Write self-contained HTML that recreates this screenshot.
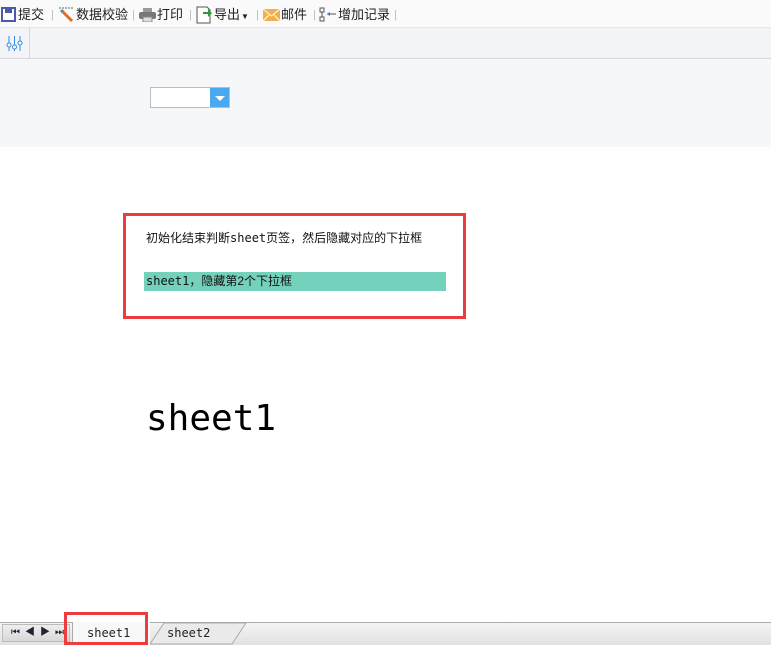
<!DOCTYPE html>
<html><head><meta charset="utf-8"><style>
*{margin:0;padding:0;box-sizing:border-box}
body{width:771px;height:645px;background:#fff;position:relative;overflow:hidden;font-family:"Liberation Sans","Noto Sans CJK SC",sans-serif;}
.tb{position:absolute;left:0;top:0;width:771px;height:28px;background:#fafafa;border-bottom:1px solid #e4e6ea;font-size:13px;color:#222}
.tb span{position:absolute;top:7px;line-height:16px}
.sep{color:#bbb;font-size:11px}
.r2{position:absolute;left:0;top:28px;width:771px;height:31px;background:#f3f4f7;border-bottom:1px solid #d6d8dd}
.gray{position:absolute;left:0;top:59px;width:771px;height:88px;background:#f6f7f9}
.mono{font-family:"DejaVu Sans Mono","Liberation Mono","Noto Sans CJK SC",monospace}
</style></head><body>
<div class="tb">
<svg style="position:absolute;left:1px;top:7px" width="15" height="15"><rect x="1" y="1" width="13" height="13" fill="#fff" stroke="#4a5aa8" stroke-width="2"/><rect x="4" y="1" width="7" height="5" fill="#4a5aa8"/></svg>
<span style="left:18px">提交</span><span class="sep" style="left:51px">|</span>
<svg style="position:absolute;left:58px;top:6px" width="17" height="17"><line x1="1" y1="2" x2="15" y2="2" stroke="#666" stroke-dasharray="2 1"/><line x1="4" y1="5" x2="14" y2="15" stroke="#e07020" stroke-width="3"/><line x1="3" y1="4" x2="5" y2="6" stroke="#49a" stroke-width="3"/></svg>
<span style="left:76px">数据校验</span><span class="sep" style="left:132px">|</span>
<svg style="position:absolute;left:139px;top:8px" width="17" height="14"><rect x="4" y="0" width="9" height="4" fill="#999"/><rect x="0" y="4" width="17" height="7" rx="2" fill="#777"/><rect x="4" y="9" width="9" height="5" fill="#ddd" stroke="#888"/></svg>
<span style="left:157px">打印</span><span class="sep" style="left:189px">|</span>
<svg style="position:absolute;left:196px;top:6px" width="16" height="18"><path d="M1 1H11L14 4V17H1Z" fill="#fff" stroke="#555"/><path d="M7 6H12V3L16 7L12 11V8H7Z" fill="#2a9a3a"/></svg>
<span style="left:214px">导出</span><span style="left:241px;font-size:8px;top:9px">▼</span><span class="sep" style="left:256px">|</span>
<svg style="position:absolute;left:263px;top:9px" width="17" height="12"><rect width="17" height="12" fill="#f0b050"/><path d="M0 0L8.5 7L17 0M0 12L6 6M17 12L11 6" stroke="#fff" fill="none"/></svg>
<span style="left:281px">邮件</span><span class="sep" style="left:313px">|</span>
<svg style="position:absolute;left:319px;top:7px" width="18" height="16"><rect x="1" y="1" width="4" height="4" fill="none" stroke="#555"/><rect x="1" y="10" width="4" height="4" fill="none" stroke="#555"/><path d="M3 5V10" stroke="#555"/><path d="M8 7H17" stroke="#555"/><path d="M8 7L11 5V9Z" fill="#3a7ac8"/></svg>
<span style="left:338px">增加记录</span><span class="sep" style="left:394px">|</span>
</div>
<div class="r2">
<div style="position:absolute;left:29px;top:0;width:1px;height:30px;background:#d6d8dd"></div>
<svg style="position:absolute;left:6px;top:7px" width="17" height="17" stroke="#3a8ad8" fill="#fff"><line x1="3" y1="1" x2="3" y2="16"/><line x1="8.5" y1="1" x2="8.5" y2="16"/><line x1="14" y1="1" x2="14" y2="16"/><circle cx="3" cy="10" r="2"/><circle cx="8.5" cy="12" r="2"/><circle cx="14" cy="8" r="2"/></svg>
</div>
<div class="gray">
<div style="position:absolute;left:150px;top:28px;width:80px;height:21px;border:1px solid #b8bccb;background:#fff"></div>
<div style="position:absolute;left:210px;top:29px;width:19px;height:19px;background:#4aa8ee"></div>
<div style="position:absolute;left:215px;top:37px;border-left:5px solid transparent;border-right:5px solid transparent;border-top:5px solid #fff"></div>
</div>
<div style="position:absolute;left:123px;top:213px;width:343px;height:106px;border:3px solid #ef3b3b"></div>
<div style="position:absolute;left:146px;top:230px;font-size:12px;line-height:16px;color:#111">初始化结束判断<span class="mono">sheet</span>页签，然后隐藏对应的下拉框</div>
<div style="position:absolute;left:144px;top:272px;width:302px;height:19px;background:#74d1bb;font-size:12px;line-height:19px;color:#111;padding-left:2px"><span class="mono">sheet1</span>，隐藏第2个下拉框</div>
<div class="mono" style="position:absolute;left:146px;top:397px;font-size:36px;line-height:44px;color:#000">sheet1</div>
<div style="position:absolute;left:0;top:622px;width:771px;height:23px;background:linear-gradient(#f4f4f4,#e2e2e2);border-top:1px solid #aaa"></div>
<div style="position:absolute;left:2px;top:624px;width:68px;height:18px;background:linear-gradient(#eee,#d8d8d8);border:1px solid #bbb;font-size:10px;color:#223;line-height:16px;letter-spacing:5px;padding-left:8px">⏮◀▶⏭</div>
<svg style="position:absolute;left:150px;top:622px" width="100" height="23"><path d="M0 22L14 1H96L82 22Z" fill="#eaeaea" stroke="#aaa"/></svg>
<div class="mono" style="position:absolute;left:167px;top:626px;font-size:12px;color:#222">sheet2</div>
<div style="position:absolute;left:72px;top:622px;width:78px;height:23px;background:#f8f8f8;border-left:1px solid #aaa"></div>
<div class="mono" style="position:absolute;left:87px;top:626px;font-size:12px;color:#222">sheet1</div>
<div style="position:absolute;left:64px;top:612px;width:84px;height:33px;border:3px solid #ef3b3b"></div>
</body></html>
